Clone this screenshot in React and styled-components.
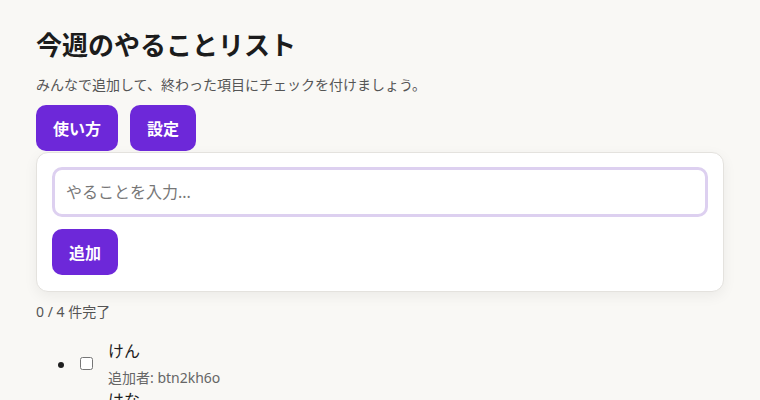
import React, { useState } from "react";
import styled, { createGlobalStyle } from "styled-components";

const GlobalStyle = createGlobalStyle`
  body {
    margin: 0;
    background: #f9f8f5;
    font-family: "Noto Sans", "Noto Sans CJK JP", sans-serif;
    color: #1f1f1f;
  }
`;

const Page = styled.main`
  padding: 26px 36px 0;
`;

const Title = styled.h1`
  margin: 0;
  font-size: 26px;
  font-weight: 700;
  line-height: 38px;
  color: #1c1c1c;
`;

const Lead = styled.p`
  margin: 10px 0 9px;
  font-size: 14px;
  line-height: 22px;
  color: #555;
`;

const Toolbar = styled.div`
  display: flex;
  gap: 12px;
`;

const Button = styled.button`
  font: inherit;
  font-size: 16px;
  font-weight: 700;
  color: #fff;
  background: #6d28d9;
  border: none;
  border-radius: 10px;
  height: 46px;
  padding: 0 17px;
  cursor: pointer;
`;

const Card = styled.section`
  margin-top: 1px;
  background: #fff;
  border: 1px solid #e4e2de;
  border-radius: 12px;
  padding: 14px 15px 16px;
  box-shadow: 0 4px 14px rgba(0, 0, 0, 0.06);
  display: flex;
  flex-direction: column;
  align-items: flex-start;
  gap: 12px;
`;

const Input = styled.input`
  box-sizing: border-box;
  width: 100%;
  height: 50px;
  border: 3px solid #ddd0f0;
  border-radius: 10px;
  padding: 0 11px;
  font: inherit;
  font-size: 16px;
  outline: none;
  &::placeholder {
    color: #777;
  }
`;

const Progress = styled.p`
  margin: 9px 0 0;
  font-size: 14px;
  line-height: 22px;
  color: #555;
`;

const List = styled.ul`
  margin: 16px 0 0;
  padding-left: 40px;
`;

const Item = styled.li``;

const Row = styled.label`
  display: inline-flex;
  align-items: center;
  gap: 12px;
`;

const Texts = styled.div`
  display: flex;
  flex-direction: column;
`;

const Name = styled.span`
  font-size: 16px;
  line-height: 24px;
  color: #1c1c1c;
`;

const Meta = styled.span`
  margin-top: 5px;
  font-size: 14px;
  line-height: 20px;
  color: #666;
`;

const initial = [
  { id: 1, text: "けん", by: "btn2kh6o", done: false },
  { id: 2, text: "はな", by: "btn2kh6o", done: false },
  { id: 3, text: "そら", by: "btn2kh6o", done: false },
  { id: 4, text: "うみ", by: "btn2kh6o", done: false },
];

export default function App() {
  const [items, setItems] = useState(initial);
  const [draft, setDraft] = useState("");

  const add = () => {
    if (!draft.trim()) return;
    setItems([...items, { id: Date.now(), text: draft, by: "btn2kh6o", done: false }]);
    setDraft("");
  };

  const toggle = (id) =>
    setItems(items.map((it) => (it.id === id ? { ...it, done: !it.done } : it)));

  const doneCount = items.filter((it) => it.done).length;

  return (
    <>
      <GlobalStyle />
      <Page>
        <Title>今週のやることリスト</Title>
        <Lead>みんなで追加して、終わった項目にチェックを付けましょう。</Lead>
        <Toolbar>
          <Button>使い方</Button>
          <Button>設定</Button>
        </Toolbar>
        <Card>
          <Input
            placeholder="やることを入力..."
            value={draft}
            onChange={(e) => setDraft(e.target.value)}
          />
          <Button onClick={add}>追加</Button>
        </Card>
        <Progress>
          {doneCount} / {items.length} 件完了
        </Progress>
        <List>
          {items.map((it) => (
            <Item key={it.id}>
              <Row>
                <input type="checkbox" checked={it.done} onChange={() => toggle(it.id)} />
                <Texts>
                  <Name>{it.text}</Name>
                  <Meta>追加者: {it.by}</Meta>
                </Texts>
              </Row>
            </Item>
          ))}
        </List>
      </Page>
    </>
  );
}
